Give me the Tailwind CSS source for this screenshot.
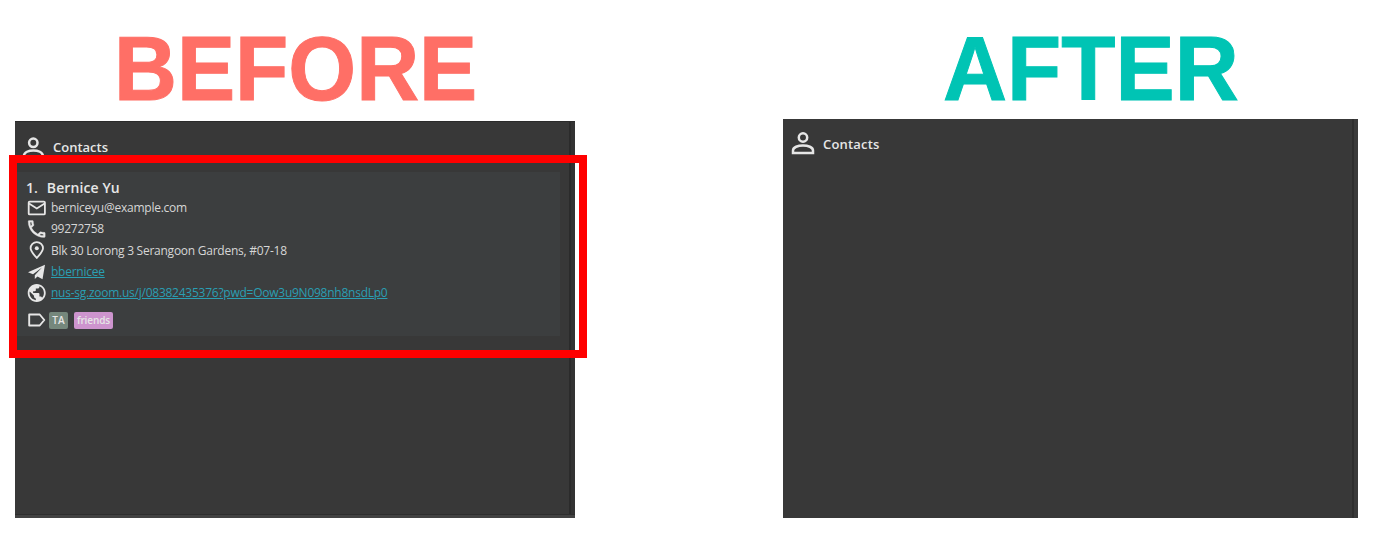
<!DOCTYPE html>
<html lang="en">
<head>
<meta charset="utf-8">
<title>Contacts: before and after</title>
<script src="https://cdn.jsdelivr.net/npm/@tailwindcss/browser@4"></script>
</head>
<body class="bg-white">
<main class="relative flex h-[537px] w-[1374px] justify-between overflow-hidden pl-[15px] pr-4 font-['Open_Sans',sans-serif] text-[#e6e6e6]">
  <section class="w-[560px]">
    <h1 class="flex h-[121px] items-start pl-[99px] pt-[17px] font-['Liberation_Sans',sans-serif] text-[91px] leading-[103px] font-bold text-[#ff6f66] [-webkit-text-stroke:1px_#ff6f66]"><span class="origin-left scale-x-[0.958]">BEFORE</span></h1>
    <div class="flex h-[397px] flex-col bg-[#383838]">
      <div class="flex min-h-0 flex-1 border-t border-[#2b2b2b]">
        <div class="flex-1">
          <div class="flex h-[50px] items-start gap-2 pl-[7px] pt-3">
            <svg class="mt-[3px] h-[22px] w-[23px]" viewBox="0 0 23 22" fill="none" stroke="#e6e6e6" stroke-width="2.5"><circle cx="11.3" cy="5.8" r="4.2"/><path d="M2 20.800v-2.300c0-3.200 4.800-5.100 9.400-5.100s9.400 1.900 9.400 5.100v2.300z"/></svg>
            <span class="text-[13px] leading-[26px] font-semibold">Contacts</span>
          </div>
          <article class="h-[164px] w-[545px] bg-[#3c3e3f] pl-3 pt-1.5">
            <h2 class="-ml-px flex gap-[9px] text-[14px] leading-[19px] font-semibold"><span>1.</span><span class="tracking-[0.1px]">Bernice Yu</span></h2>
            <ul class="text-[12px] leading-[21.3px] tracking-[-0.25px] text-[#d6d6d6]">
              <li class="flex items-center gap-[5px]"><svg class="h-[18px] w-[19px]" viewBox="0 0 19 18" fill="none" stroke="#e6e6e6" stroke-width="1.8"><rect x="1.7" y="2.6" width="16.2" height="12.8" rx="1"/><path d="M2 4.500l7.800 5 7.800-5"/></svg><span>berniceyu@example.com</span></li>
              <li class="flex items-center gap-[5px]"><svg class="h-[18px] w-[19px]" viewBox="2.3 2.5 19 19" fill="#e6e6e6" stroke="#e6e6e6" stroke-width="0.3"><path d="M6.54 5c.06.89.21 1.76.45 2.59l-1.2 1.2c-.41-1.2-.67-2.47-.76-3.79h1.51m9.86 12.02c.85.24 1.72.39 2.6.45v1.49c-1.32-.09-2.59-.35-3.8-.75l1.2-1.19M7.5 3H4c-.55 0-1 .45-1 1 0 9.39 7.61 17 17 17 .55 0 1-.45 1-1v-3.49c0-.55-.45-1-1-1-1.240 0-2.450-.2-3.570-.57a.8.8 0 0 0-.31-.05c-.26 0-.51.1-.71.29l-2.200 2.200a15.150 15.150 0 0 1-6.590-6.590l2.200-2.200c.28-.28.36-.67.25-1.020A11.360 11.360 0 0 1 8.500 4c0-.55-.45-1-1-1z"/></svg><span>99272758</span></li>
              <li class="flex items-center gap-[5px]"><svg class="h-[18px] w-[19px]" viewBox="0 0 19 18" fill="none" stroke="#e6e6e6" stroke-width="1.8"><path d="M9.800 17c-3.900-4.200-6.200-7-6.200-9.700a6.200 6.200 0 0 1 12.400 0c0 2.700-2.300 5.500-6.200 9.700z"/><circle cx="9.800" cy="7.200" r="2" fill="#e6e6e6" stroke="none"/></svg><span>Blk 30 Lorong 3 Serangoon Gardens, #07-18</span></li>
              <li class="flex items-center gap-[5px]"><svg class="h-[18px] w-[19px]" viewBox="0 0 19 18" fill="#e6e6e6"><path d="M18 1.800L1 9.200l5 2.100L15 4.500 7.800 12.200v3.900l2.700-2.500 5 2.600z"/></svg><span class="text-[#2a9fb3] underline">bbernicee</span></li>
              <li class="flex items-center gap-[5px]"><svg class="h-[18px] w-[19px]" viewBox="1.500 2 20.500 20" fill="#e6e6e6"><path d="M12 2C6.480 2 2 6.480 2 12s4.480 10 10 10 10-4.480 10-10S17.520 2 12 2zm-1 17.930c-3.950-.49-7-3.850-7-7.930 0-.62.080-1.210.210-1.790L9 15v1c0 1.100.9 2 2 2v1.930zm6.900-2.540c-.26-.81-1-1.390-1.900-1.390h-1v-3c0-.55-.45-1-1-1H8v-2h2c.55 0 1-.45 1-1V7h2c1.100 0 2-.9 2-2v-.41c2.930 1.190 5 4.060 5 7.410 0 2.080-.8 3.970-2.100 5.390z"/></svg><span class="text-[#2a9fb3] underline">nus-sg.zoom.us/j/08382435376?pwd=Oow3u9N098nh8nsdLp0</span></li>
            </ul>
            <div class="mt-2 flex items-center text-[10px] leading-[17px]">
              <svg class="h-[18px] w-[19px]" viewBox="0 0 19 18" fill="none" stroke="#e6e6e6" stroke-width="1.900" stroke-linejoin="round"><path d="M2.200 3.500h10.500l4.600 5.500-4.600 5.500H2.200z"/></svg>
              <span class="ml-[3px] h-[17px] w-[19px] rounded-xs bg-[#75877c] text-center font-semibold">TA</span>
              <span class="ml-1.5 h-[17px] w-[39px] rounded-xs bg-[#cd94ce] text-center font-semibold tracking-[-0.1px]">friends</span>
            </div>
          </article>
        </div>
        <div class="w-[2px] bg-[#2b2b2b]"></div>
        <div class="w-1 bg-[#333333]"></div>
      </div>
      <div class="h-1 border-t border-[#2e2e2e] bg-[#424242]"></div>
    </div>
  </section>
  <section class="w-[575px]">
    <h1 class="flex h-[119px] items-start pl-[160px] pt-[17px] font-['Liberation_Sans',sans-serif] text-[91px] leading-[103px] font-bold text-[#00c4b4] [-webkit-text-stroke:1px_#00c4b4]"><span class="origin-left scale-x-[0.975]">AFTER</span></h1>
    <div class="flex h-[399px] bg-[#383838]">
      <div class="flex flex-1 items-start gap-2 pl-2 pt-3">
        <svg class="mt-px h-[23px] w-6" viewBox="0 0 24 23" fill="none" stroke="#e6e6e6" stroke-width="2.500"><circle cx="12" cy="5.500" r="4.200"/><path d="M2 21v-2.500c0-3.300 5-5 10-5s10 1.700 10 5V21z"/></svg>
        <span class="text-[13px] leading-[26px] font-semibold tracking-[0.2px]">Contacts</span>
      </div>
      <div class="w-[2px] bg-[#2e2e2e]"></div>
      <div class="w-1 bg-[#3a3a3a]"></div>
    </div>
  </section>
  <div class="absolute left-[9px] top-[155px] h-[203px] w-[578px] border-8 border-[#ff0000]"></div>
</main>
</body>
</html>
